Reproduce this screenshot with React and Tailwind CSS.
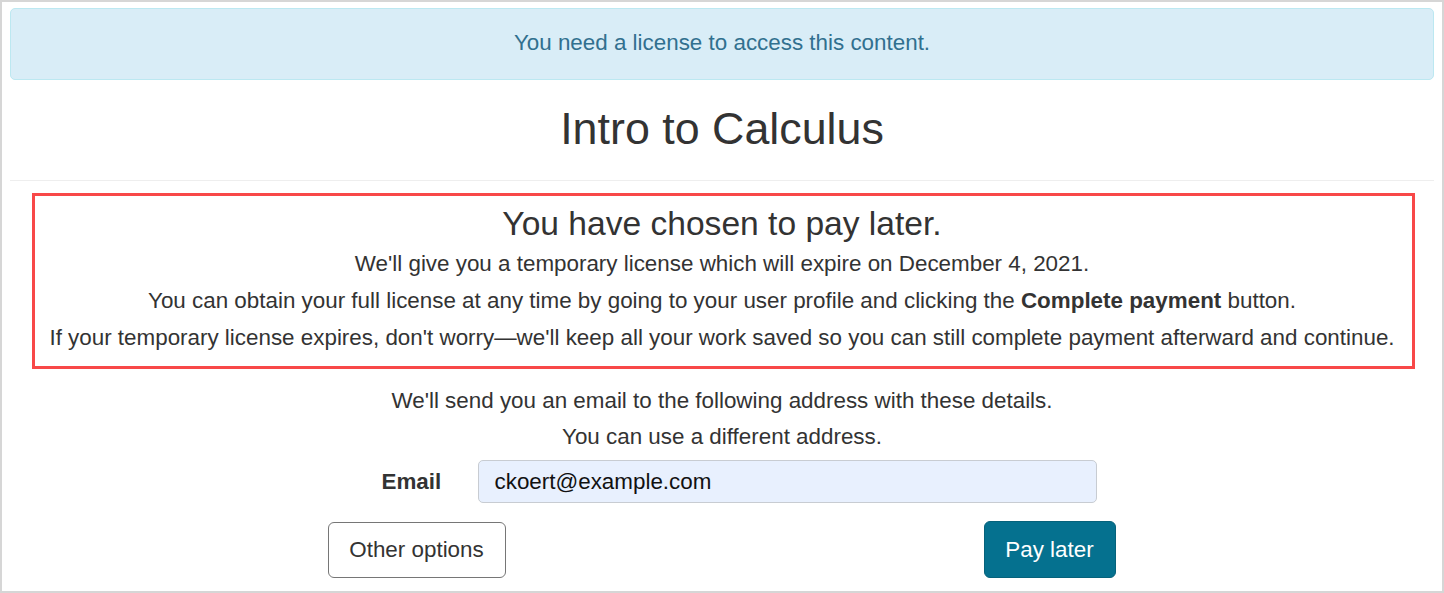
export default function App() {
  return (
    <div
      className="w-[1444px] h-[593px] border-2 border-[#d6d6d6] bg-white overflow-hidden box-border text-[#333]"
      style={{ fontFamily: '"Liberation Sans", Arial, sans-serif' }}
    >
      <div className="mx-[8px] mt-[6px] h-[72px] rounded-[5px] border border-[#bce8f1] bg-[#d9edf7] flex items-center justify-center text-[22.4px] leading-[32px] text-[#31708f]">
        <span className="-mt-[2px]">You need a license to access this content.</span>
      </div>
      <h1 className="mt-[24px] text-[44.8px] leading-[48px] text-center font-normal text-[#333]">
        Intro to Calculus
      </h1>
      <hr className="mx-[8px] mt-[28px] border-0 border-t border-[#eeeeee]" />
      <div className="mt-[12px] ml-[30px] mr-[27px] border-[3px] border-[#f84848] pt-[8px] pb-[12px] pr-[3px] text-center">
        <h2 className="text-[33.6px] leading-[40px] mb-[3px] font-normal">You have chosen to pay later.</h2>
        <p className="text-[22.4px] leading-[33px] mb-[4px]">
          We'll give you a temporary license which will expire on December 4, 2021.
        </p>
        <p className="text-[22.4px] leading-[33px] mb-[4px]">
          You can obtain your full license at any time by going to your user profile and clicking the{" "}
          <b className="font-bold">Complete payment</b> button.
        </p>
        <p className="text-[22.4px] leading-[33px]">
          If your temporary license expires, don't worry—we'll keep all your work saved so you can still complete payment afterward and continue.
        </p>
      </div>
      <p className="mt-[15px] text-[22.4px] leading-[33px] text-center">
        We'll send you an email to the following address with these details.
      </p>
      <p className="mt-[3px] text-[22.4px] leading-[33px] text-center">You can use a different address.</p>
      <div className="w-[789px] mx-auto">
        <div className="mt-[7px] flex items-center pl-[54px]">
          <label className="w-[96px] text-[22.4px] font-bold">Email</label>
          <div className="w-[619px] h-[43px] rounded-[5px] border border-[#c8ccd2] bg-[#e8f0fe] flex items-center pl-[16px] text-[22.4px] text-[#111]">
            ckoert@example.com
          </div>
        </div>
        <div className="mt-[18px] flex justify-between items-end">
          <button className="w-[178px] h-[56px] rounded-[6px] border border-[#767676] bg-white text-[22.4px] text-[#333]">
            Other options
          </button>
          <button className="w-[132px] h-[57px] mr-[1px] rounded-[6px] border border-[#06627b] bg-[#05718f] text-[22.4px] text-white">
            Pay later
          </button>
        </div>
      </div>
    </div>
  );
}
